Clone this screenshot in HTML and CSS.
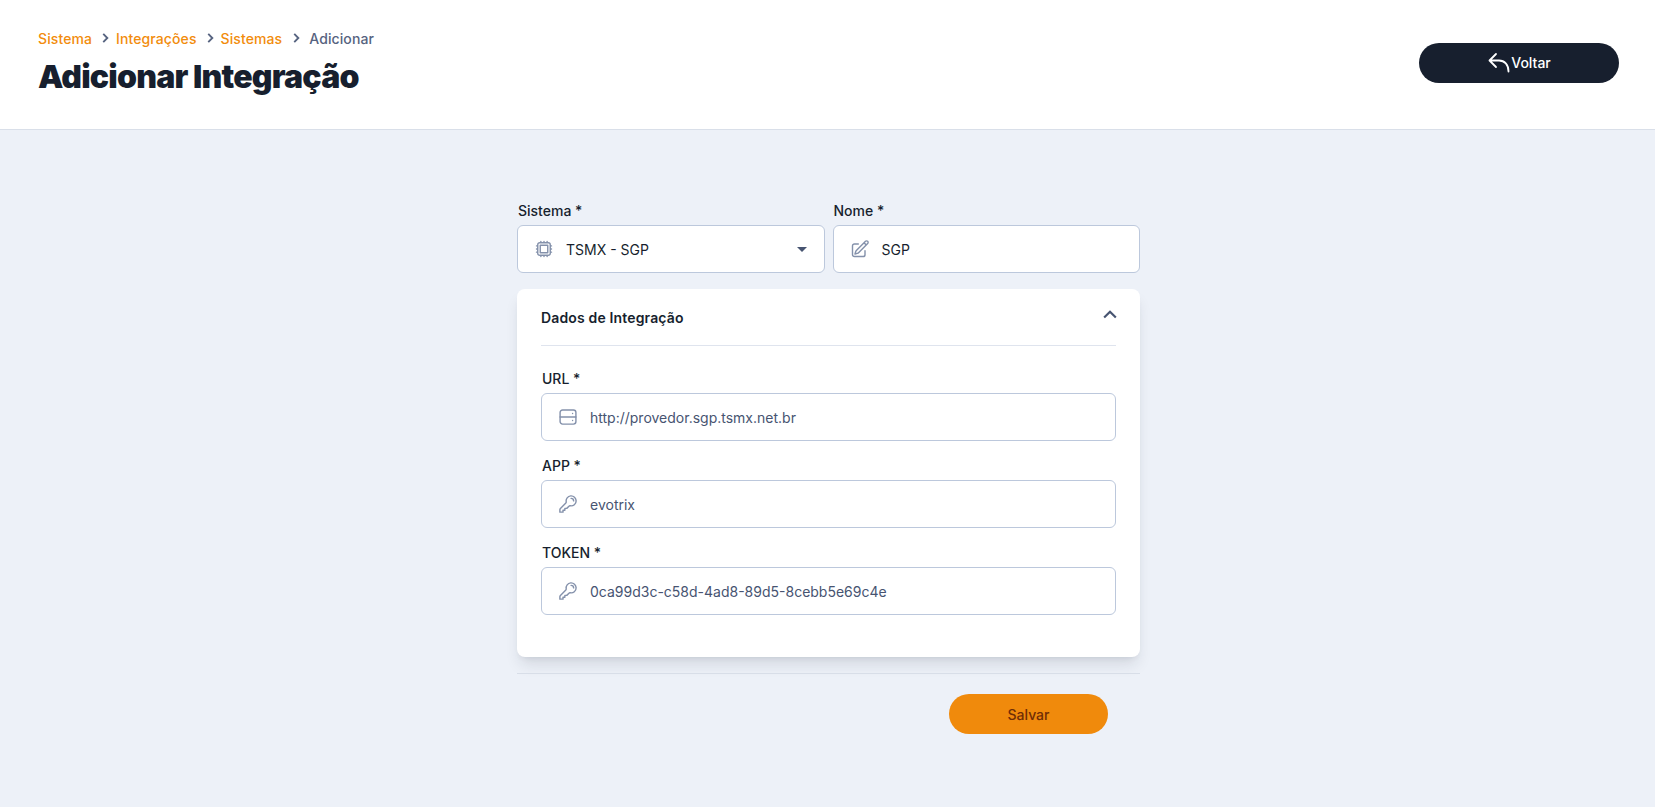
FILE: index.html
```html
<!DOCTYPE html>
<html lang="pt-BR">
<head>
  <meta charset="UTF-8" />
  <meta name="viewport" content="width=device-width, initial-scale=1" />
  <title>Adicionar Integração</title>
  <link rel="stylesheet" href="styles.css">
</head>
<body>
  <header class="topo">
    <div>
      <nav class="migalhas">
        <a href="#">Sistema</a>
        <svg class="seta" viewBox="0 0 24 24"><path d="m9 5 7 7-7 7" /></svg>
        <a href="#">Integrações</a>
        <svg class="seta" viewBox="0 0 24 24"><path d="m9 5 7 7-7 7" /></svg>
        <a href="#">Sistemas</a>
        <svg class="seta" viewBox="0 0 24 24"><path d="m9 5 7 7-7 7" /></svg>
        <span>Adicionar</span>
      </nav>
      <h1>Adicionar Integração</h1>
    </div>
    <button class="btn btn-voltar" type="button">
      <svg class="icone-voltar" viewBox="0 0 24 24"><path d="M9 4 2.5 10.5 9 17M2.5 10.5H12c5.500 0 9.500 4 9.500 11" /></svg>
      Voltar
    </button>
  </header>

  <main class="conteudo">
    <form class="formulario">
      <div class="linha">
        <div class="campo">
          <label>Sistema *</label>
          <div class="caixa">
            <svg class="icone" viewBox="0 0 24 24"><path d="M8.25 3v1.5M4.5 8.25H3m18 0h-1.5M4.5 12H3m18 0h-1.5m-15 3.75H3m18 0h-1.5M8.25 19.5V21M12 3v1.5m0 15V21m3.75-18v1.5m0 15V21m-9-1.5h10.5a2.25 2.25 0 0 0 2.25-2.25V6.75a2.25 2.25 0 0 0-2.25-2.25H6.75A2.25 2.25 0 0 0 4.5 6.75v10.5a2.25 2.25 0 0 0 2.25 2.25Zm.75-12h9v9h-9v-9Z" /></svg>
            <span class="valor escuro">TSMX - SGP</span>
            <span class="triangulo"></span>
          </div>
        </div>
        <div class="campo">
          <label>Nome *</label>
          <div class="caixa">
            <svg class="icone" viewBox="0 0 24 24"><path d="m16.862 4.487 1.687-1.688a1.875 1.875 0 1 1 2.652 2.652L10.582 16.07a4.5 4.5 0 0 1-1.897 1.13L6 18l.8-2.685a4.5 4.5 0 0 1 1.13-1.897l8.932-8.931Zm0 0L19.5 7.125M18 14v4.75A2.25 2.25 0 0 1 15.75 21H5.25A2.25 2.25 0 0 1 3 18.75V8.25A2.25 2.25 0 0 1 5.25 6H10" /></svg>
            <span class="valor escuro">SGP</span>
          </div>
        </div>
      </div>

      <section class="cartao">
        <div class="cartao-topo">
          <h2>Dados de Integração</h2>
          <svg class="icone-subir" viewBox="0 0 24 24"><path d="m5 15 7-7 7 7" /></svg>
        </div>
        <div class="campo">
          <label>URL *</label>
          <div class="caixa">
            <svg class="icone" viewBox="0 0 24 24"><rect x="2.500" y="3.500" width="19" height="17" rx="3" /><path d="M2.500 12h19M17.500 7.750h.01M17.500 16.250h.01" /></svg>
            <span class="valor">http://provedor.sgp.tsmx.net.br</span>
          </div>
        </div>
        <div class="campo">
          <label>APP *</label>
          <div class="caixa">
            <svg class="icone" viewBox="0 0 24 24"><path d="M15.750 5.250a3 3 0 0 1 3 3m3 0a6 6 0 0 1-7.029 5.912c-.563-.097-1.159.026-1.563.43L10.500 17.250H8.250v2.250H6v2.250H2.250v-2.818c0-.597.237-1.170.659-1.591l6.499-6.499c.404-.404.527-1 .43-1.563A6 6 0 1 1 21.750 8.250Z" /></svg>
            <span class="valor">evotrix</span>
          </div>
        </div>
        <div class="campo">
          <label>TOKEN *</label>
          <div class="caixa">
            <svg class="icone" viewBox="0 0 24 24"><path d="M15.750 5.250a3 3 0 0 1 3 3m3 0a6 6 0 0 1-7.029 5.912c-.563-.097-1.159.026-1.563.43L10.500 17.250H8.250v2.250H6v2.250H2.250v-2.818c0-.597.237-1.170.659-1.591l6.499-6.499c.404-.404.527-1 .43-1.563A6 6 0 1 1 21.750 8.250Z" /></svg>
            <span class="valor">0ca99d3c-c58d-4ad8-89d5-8cebb5e69c4e</span>
          </div>
        </div>
      </section>

      <div class="rodape">
        <button class="btn btn-salvar" type="button">Salvar</button>
      </div>
    </form>
  </main>
</body>
</html>
```

FILE: styles.css
```css
* {
  margin: 0;
  padding: 0;
  box-sizing: border-box;
}
body {
  font-family: Inter, "Noto Sans", sans-serif;
  background: #edf1f8;
  color: #171f2e;
  min-height: 100vh;
  font-size: 14px;
}
.topo {
  height: 130px;
  background: #fff;
  border-bottom: 1px solid #d9dfe9;
  padding: 27px 36px 0 38px;
  display: flex;
  justify-content: space-between;
  align-items: flex-start;
}
.migalhas {
  display: flex;
  align-items: center;
  height: 22px;
  font-weight: 500;
  letter-spacing: 0.1px;
  color: #566380;
}
.migalhas a {
  color: #f28c0c;
  text-decoration: none;
}
.seta {
  width: 14px;
  height: 14px;
  margin: 0 4px 0 6px;
  fill: none;
  stroke: #566380;
  stroke-width: 3.2;
}
.seta:last-of-type {
  margin: 0 6px 0 7px;
}
h1 {
  font-size: 32px;
  line-height: 40px;
  font-weight: 900;
  letter-spacing: -0.8px;
  margin-top: 8px;
}
.btn {
  border: none;
  border-radius: 20px;
  height: 40px;
  font-family: inherit;
  font-size: 14px;
  font-weight: 500;
  cursor: pointer;
}
.btn-voltar {
  width: 200px;
  margin-top: 16px;
  padding-bottom: 2px;
  background: #171f2e;
  color: #fff;
  display: flex;
  align-items: center;
  justify-content: center;
}
.icone-voltar {
  width: 24px;
  height: 24px;
  fill: none;
  stroke: #fff;
  stroke-width: 1.8;
  stroke-linecap: round;
  stroke-linejoin: round;
}
.conteudo {
  padding: 71px 0 0 2px;
  display: flex;
  justify-content: center;
}
.formulario {
  width: 623px;
}
.linha {
  display: grid;
  grid-template-columns: 1fr 1fr;
  gap: 8px;
}
label {
  display: block;
  font-weight: 500;
  line-height: 20px;
  margin: 0 0 4px 1px;
}
.caixa {
  height: 48px;
  background: #fff;
  border: 1px solid #bcc8dc;
  border-radius: 6px;
  padding: 0 16px;
  display: flex;
  align-items: center;
  gap: 12px;
}
.icone {
  width: 20px;
  height: 20px;
  flex-shrink: 0;
  fill: none;
  stroke: #8491ab;
  stroke-width: 1.7;
  stroke-linecap: round;
  stroke-linejoin: round;
}
.valor {
  flex: 1;
  color: #475471;
}
.valor.escuro {
  color: #171f2e;
}
.triangulo {
  width: 0;
  height: 0;
  margin-right: 1px;
  border-left: 5px solid transparent;
  border-right: 5px solid transparent;
  border-top: 5px solid #475471;
}
.cartao {
  margin-top: 16px;
  background: #fff;
  border-radius: 8px;
  padding: 0 24px 42px;
  box-shadow: 0 10px 15px -3px rgb(23 31 46 / 0.12), 0 4px 6px -4px rgb(23 31 46 / 0.1);
}
.cartao-topo {
  height: 57px;
  border-bottom: 1px solid #dfe4ee;
  display: flex;
  justify-content: space-between;
  align-items: center;
  margin-bottom: 23px;
}
h2 {
  font-size: 14px;
  font-weight: 600;
  letter-spacing: 0.15px;
  margin-top: 1px;
}
.icone-subir {
  width: 20px;
  height: 20px;
  margin: 0 -4px 4px 0;
  fill: none;
  stroke: #475471;
  stroke-width: 2.6;
}
.cartao .campo + .campo {
  margin-top: 15px;
}
.rodape {
  margin-top: 16px;
  border-top: 1px solid #d8dee8;
  padding: 20px 32px 0 0;
  display: flex;
  justify-content: flex-end;
}
.btn-salvar {
  width: 159px;
  background: #f08a0c;
  color: #6f2d06;
}
```
